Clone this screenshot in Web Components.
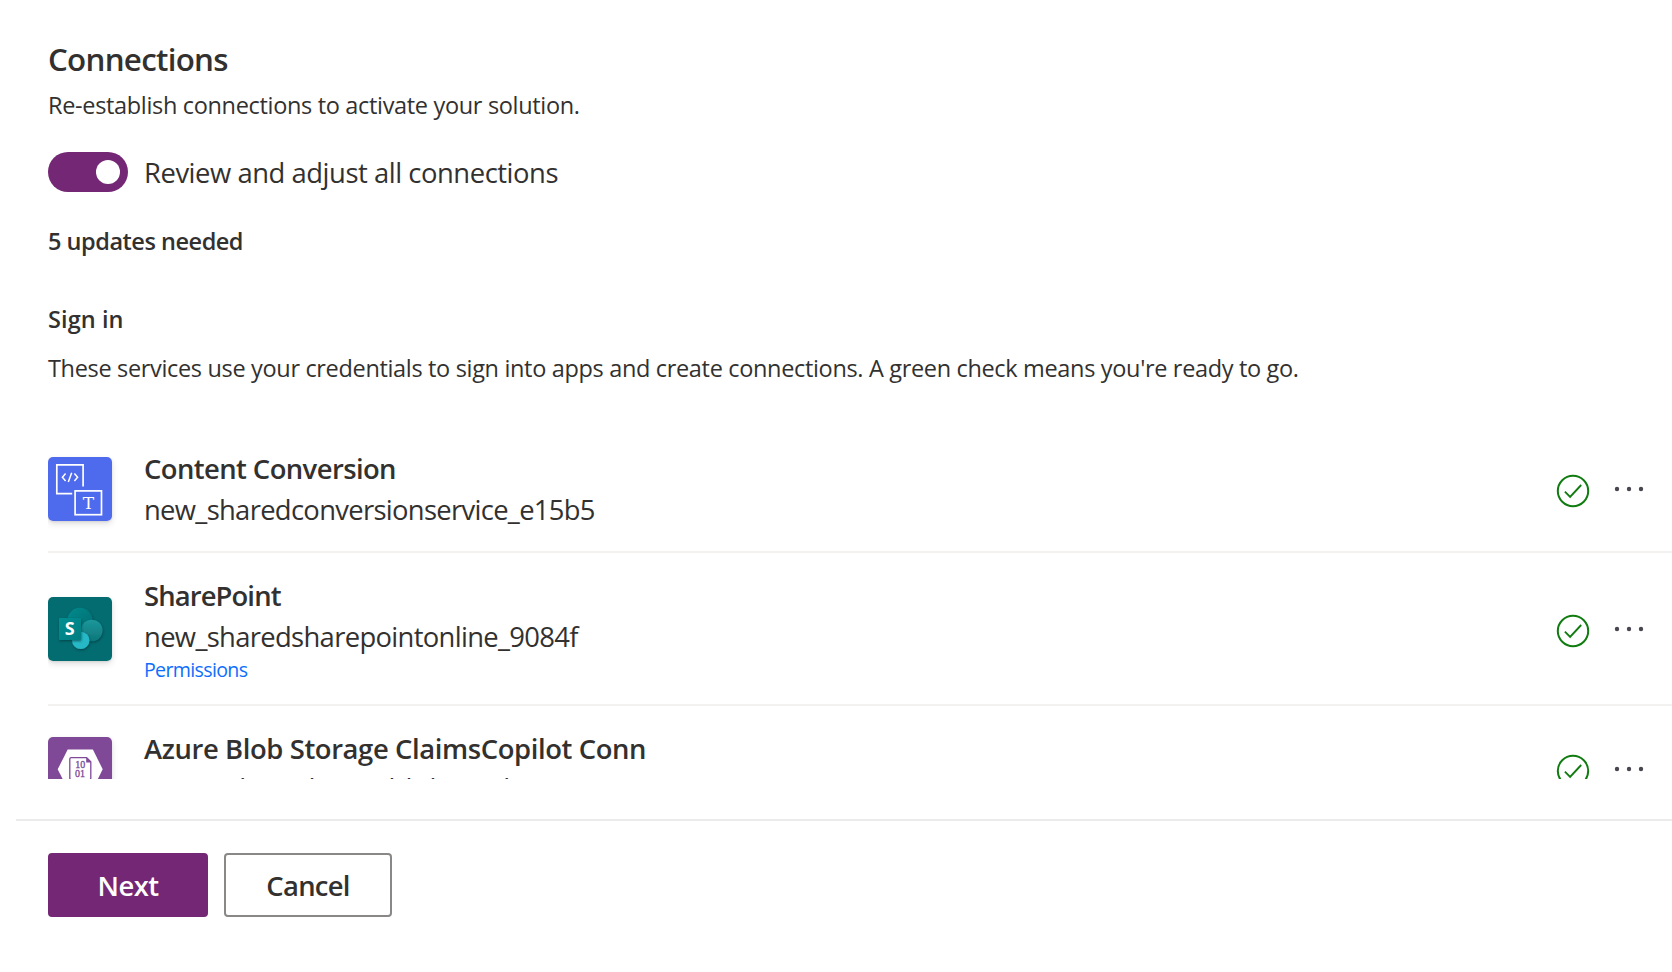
<!DOCTYPE html>
<html lang="en">
<head>
<meta charset="utf-8">
<title>Connections</title>
<style>
html, body { margin: 0; height: 100%; background: #fff; overflow: hidden; }
body { font-family: "Open Sans", "Noto Sans", sans-serif; color: #323130; }
</style>
</head>
<body>
<connections-page></connections-page>
<script>
function define(name, markup, extra) {
  const tpl = document.createElement('template');
  tpl.innerHTML = markup;
  customElements.define(name, class extends HTMLElement {
    constructor() {
      super();
      this.attachShadow({ mode: 'open' }).append(tpl.content.cloneNode(true));
    }
    connectedCallback() { if (extra) extra.call(this); }
  });
}

/* One line of text whose letter spacing is adjusted to fill the given width. */
define('fit-text', `
<style>
:host { display: block; white-space: nowrap; }
span { display: inline-block; vertical-align: top; }
</style><span><slot></slot></span>`, function () {
  const span = this.shadowRoot.querySelector('span');
  const width = parseFloat(this.getAttribute('width'));
  const count = this.textContent.length;
  span.style.letterSpacing = '0px';
  const natural = span.getBoundingClientRect().width;
  if (natural) span.style.letterSpacing = ((width - natural) / (count - 1)).toFixed(4) + 'px';
});

define('toggle-switch', `
<style>
:host { display: flex; align-items: center; justify-content: flex-end; box-sizing: border-box; width: 80px; height: 40px; padding: 0 8px; border-radius: 20px; background: #742774; flex: none; }
i { width: 24px; height: 24px; border-radius: 50%; background: #fff; }
</style><i></i>`);

define('status-check', `
<style>:host { display: block; width: 34px; height: 34px; } svg { display: block; }</style>
<svg width="34" height="34" viewBox="0 0 34 34" fill="none" stroke="#107c10" stroke-width="2">
<circle cx="17" cy="17" r="15.2"/><path d="M8.9 17.6 14.1 22.8 25.2 11" stroke-width="1.9"/></svg>`);

define('more-dots', `
<style>:host { display: block; width: 32px; height: 8px; } svg { display: block; }</style>
<svg width="32" height="8" fill="#494650"><circle cx="4" cy="4" r="2.2"/><circle cx="16" cy="4" r="2.2"/><circle cx="28" cy="4" r="2.2"/></svg>`);

const tile = `<style>:host { display: block; width: 64px; height: 64px; border-radius: 5px; overflow: hidden; box-shadow: 0 3px 6px rgba(0,0,0,.13), 0 1px 2px rgba(0,0,0,.08); } svg { display: block; }</style>`;

define('content-icon', tile + `
<svg width="64" height="64" viewBox="0 0 64 64" fill="none" stroke="#fff" stroke-width="1.7">
<rect width="64" height="64" fill="#4f6bed" stroke="none"/>
<path d="M35.1 29.5V7.9H8.8v28.7h15.4"/><rect x="27.1" y="33.9" width="26.4" height="23.8"/>
<path d="M17.6 16.6 14.4 20.3 17.6 24M26.4 16.6 29.6 20.3 26.4 24M23.7 15.8 20.3 25" stroke-width="1.5"/>
<text x="40.3" y="51.7" text-anchor="middle" font-family="DejaVu Serif, serif" font-size="17" fill="#fff" stroke="none">T</text></svg>`);

define('sharepoint-icon', tile + `
<svg width="64" height="64" viewBox="0 0 64 64">
<defs>
<linearGradient id="a" x1="0" y1="0" x2="1" y2="1"><stop offset="0" stop-color="#078a8d"/><stop offset="1" stop-color="#036c70"/></linearGradient>
<linearGradient id="b" x1="0" y1="0" x2="0" y2="1"><stop offset="0" stop-color="#1c979b"/><stop offset="1" stop-color="#0d777b"/></linearGradient>
<linearGradient id="c" x1="0" y1="0" x2="1" y2="1"><stop offset="0" stop-color="#058f92"/><stop offset="1" stop-color="#027d81"/></linearGradient>
<filter id="s" x="-40%" y="-40%" width="180%" height="180%"><feDropShadow dx="0.5" dy="1.2" stdDeviation="1.3" flood-color="#002f33" flood-opacity=".6"/></filter>
</defs>
<rect width="64" height="64" fill="#036c70"/>
<circle cx="32" cy="23.3" r="12.5" fill="url(#a)" filter="url(#s)"/>
<circle cx="43.7" cy="33.5" r="10.8" fill="url(#b)" filter="url(#s)"/>
<circle cx="32.7" cy="43.4" r="8.7" fill="#28b8c6" filter="url(#s)"/>
<rect x="11" y="21" width="22" height="22" rx="1" fill="url(#c)" filter="url(#s)"/>
<text x="21.8" y="38.2" text-anchor="middle" font-family="Open Sans, sans-serif" font-weight="700" font-size="18" fill="#fff">S</text></svg>`);

define('blob-icon', tile + `
<svg width="64" height="64" viewBox="0 0 64 64">
<rect width="64" height="64" fill="#804998"/>
<path d="M19.7 12.6h25.2L54.7 32.3 44.9 52H19.7L9.7 32.3z" fill="#fff"/>
<path d="M23.2 20.6h15.4l4.2 4.2v16.4q0 1.4-1.4 1.4H23.2q-1.4 0-1.4-1.4V22q0-1.4 1.4-1.4z" fill="#fff" stroke="#804998" stroke-width="1.3"/>
<path d="M38.2 20.4v5h5z" fill="#804998"/>
<g font-family="Liberation Serif, serif" font-size="10" fill="#804998" stroke="#804998" stroke-width=".3" text-anchor="middle"><text x="32.2" y="30.8">10</text><text x="32" y="39.6">01</text></g></svg>`);

define('connection-row', `
<style>
:host { display: flex; align-items: center; padding: 21px 27px 21px 0; border-bottom: 2px solid #f3f2f1; }
.text { flex: 1; margin-left: 32px; padding-top: 2px; min-width: 0; }
.title { font-size: 27.4px; line-height: 40px; font-weight: 600; }
.name { font-size: 27.4px; line-height: 40px; padding-top: 1px; }
.link { display: block; font-size: 19.6px; line-height: 26px; color: #0d6efd; }
status-check { margin: 4px 23px 0 0; }
</style>
<slot name="icon"></slot>
<div class="text"><div class="title"><slot name="title"></slot></div><div class="name"><slot name="name"></slot></div><div class="link"><slot name="link"></slot></div></div>
<status-check></status-check><more-dots></more-dots>`, function () {
  if (!this.querySelector('[slot=link]')) this.shadowRoot.querySelector('.link').remove();
});

define('action-button', `
<style>
:host { display: flex; align-items: center; justify-content: center; box-sizing: border-box; width: 168px; height: 64px; padding-top: 2px; border: 2px solid #8a8886; border-radius: 4px; font-size: 27.4px; line-height: 40px; font-weight: 600; }
:host([primary]) { width: 160px; background: #742774; border-color: #742774; color: #fff; }
</style><slot></slot>`);

define('connections-page', `
<style>
:host { display: flex; flex-direction: column; height: 972px; box-sizing: border-box; padding-top: 37px; }
header { padding-left: 48px; height: 389px; box-sizing: border-box; flex: none; }
.h1 { font-size: 31.3px; line-height: 44px; font-weight: 600; }
.p { font-size: 23.5px; line-height: 32px; }
.b { font-size: 23.5px; line-height: 32px; font-weight: 600; }
.toggle { display: flex; align-items: center; gap: 16px; height: 40px; margin: 31px 0 33px; font-size: 27.4px; line-height: 40px; }
main { height: 353px; margin-left: 48px; overflow: hidden; flex: none; }
footer { margin: 40px 0 0 16px; border-top: 2px solid #ebebeb; padding: 32px 32px 0; display: flex; gap: 16px; }
</style>
<header>
<fit-text class="h1" width="180.5">Connections</fit-text>
<fit-text class="p" style="margin-top:8px" width="532">Re-establish connections to activate your solution.</fit-text>
<div class="toggle"><toggle-switch></toggle-switch><fit-text style="padding-top:2px" width="414.5">Review and adjust all connections</fit-text></div>
<fit-text class="b" width="195.5">5 updates needed</fit-text>
<fit-text class="b" style="margin-top:46px" width="75.5">Sign in</fit-text>
<fit-text class="p" style="margin-top:17px" width="1251">These services use your credentials to sign into apps and create connections. A green check means you're ready to go.</fit-text>
</header>
<main>
<connection-row><content-icon slot="icon"></content-icon><fit-text slot="title" width="252.5">Content Conversion</fit-text><fit-text slot="name" width="451.5">new_sharedconversionservice_e15b5</fit-text></connection-row>
<connection-row><sharepoint-icon slot="icon"></sharepoint-icon><fit-text slot="title" width="137.5">SharePoint</fit-text><fit-text slot="name" width="434.5">new_sharedsharepointonline_9084f</fit-text><fit-text slot="link" width="104">Permissions</fit-text></connection-row>
<connection-row><blob-icon slot="icon"></blob-icon><fit-text slot="title" width="502.5">Azure Blob Storage ClaimsCopilot Conn</fit-text><fit-text slot="name" style="margin:-1px 0 1px" width="376">cr8ca_sharedazureblob_caeb</fit-text></connection-row>
</main>
<footer><action-button primary><fit-text width="61.5">Next</fit-text></action-button><action-button><fit-text width="84">Cancel</fit-text></action-button></footer>`);
</script>
</body>
</html>
